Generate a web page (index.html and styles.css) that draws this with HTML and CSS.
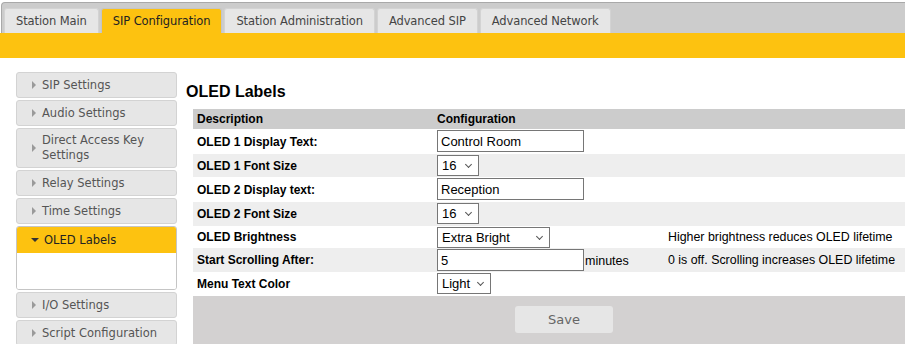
FILE: index.html
```html
<!DOCTYPE html>
<html>
<head>
<meta charset="utf-8">
<link rel="stylesheet" href="styles.css">
</head>
<body>
<div class="tabbar">
  <div class="tab">Station Main</div>
  <div class="tab active">SIP Configuration</div>
  <div class="tab">Station Administration</div>
  <div class="tab">Advanced SIP</div>
  <div class="tab">Advanced Network</div>
</div>
<div class="band"></div>
<div class="page">
  <nav class="side">
    <div class="item"><span class="tri"></span><span>SIP Settings</span></div>
    <div class="item"><span class="tri"></span><span>Audio Settings</span></div>
    <div class="item tall"><span class="tri"></span><span>Direct Access Key<br>Settings</span></div>
    <div class="item"><span class="tri"></span><span>Relay Settings</span></div>
    <div class="item"><span class="tri"></span><span>Time Settings</span></div>
    <div class="group">
      <div class="item open"><span class="tri down"></span><span>OLED Labels</span></div>
      <div class="groupbody"></div>
    </div>
    <div class="item"><span class="tri"></span><span>I/O Settings</span></div>
    <div class="item"><span class="tri"></span><span>Script Configuration</span></div>
  </nav>
  <main class="main">
    <h1 class="title">OLED Labels</h1>
    <div class="tbl">
      <div class="row head">
        <div class="c1">Description</div>
        <div class="c2">Configuration</div>
        <div class="c3"></div>
      </div>
      <div class="row h25">
        <div class="c1">OLED 1 Display Text:</div>
        <div class="c2"><input class="txt" value="Control Room"></div>
        <div class="c3"></div>
      </div>
      <div class="row alt h23">
        <div class="c1">OLED 1 Font Size</div>
        <div class="c2"><div class="sel w42">16<span class="chev"></span></div></div>
        <div class="c3"></div>
      </div>
      <div class="row h25">
        <div class="c1">OLED 2 Display text:</div>
        <div class="c2"><input class="txt" value="Reception"></div>
        <div class="c3"></div>
      </div>
      <div class="row alt">
        <div class="c1">OLED 2 Font Size</div>
        <div class="c2"><div class="sel w42">16<span class="chev"></span></div></div>
        <div class="c3"></div>
      </div>
      <div class="row h22">
        <div class="c1">OLED Brightness</div>
        <div class="c2"><div class="sel w113">Extra Bright<span class="chev"></span></div></div>
        <div class="c3">Higher brightness reduces OLED lifetime</div>
      </div>
      <div class="row alt">
        <div class="c1">Start Scrolling After:</div>
        <div class="c2"><input class="txt" value="5"><span class="unit">minutes</span></div>
        <div class="c3">0 is off. Scrolling increases OLED lifetime</div>
      </div>
      <div class="row">
        <div class="c1">Menu Text Color</div>
        <div class="c2"><div class="sel w54">Light<span class="chev"></span></div></div>
        <div class="c3"></div>
      </div>
      <div class="foot">
        <button class="save">Save</button>
      </div>
    </div>
  </main>
</div>
</body>
</html>
```
FILE: styles.css
```css
html, body { margin: 0; padding: 0; background: #fff; }
body { font-family: "Liberation Sans", Arial, sans-serif; color: #000; overflow: hidden; }

.tabbar {
  margin: 2px 0 0 1px;
  height: 31px;
  background: #cccccc;
  border-top: 1px solid #a9a9a9;
  border-left: 1px solid #a9a9a9;
  border-top-left-radius: 4px;
  box-sizing: border-box;
  display: flex;
  align-items: flex-end;
  padding-left: 2px;
  gap: 2px;
}
.tab {
  font-family: "DejaVu Sans", Verdana, sans-serif;
  font-size: 11.5px;
  letter-spacing: -0.1px;
  color: #444;
  background: #e6e6e6;
  border: 1px solid #d3d3d3;
  border-bottom: none;
  border-top-left-radius: 3px;
  border-top-right-radius: 3px;
  height: 25px;
  box-sizing: border-box;
  padding: 0 11px;
  display: flex;
  align-items: center;
}
.tab.active { background: #fdc210; border-color: #c5c5c5; color: #222; }
.band { height: 25px; background: #fdc210; }

.page { display: flex; align-items: flex-start; padding: 14px 0 0 16px; }
.side { width: 161px; display: flex; flex-direction: column; gap: 2px; flex: none; }
.item {
  font-family: "DejaVu Sans", Verdana, sans-serif;
  font-size: 11.5px;
  color: #555;
  background: #e6e6e6;
  border: 1px solid #d3d3d3;
  border-radius: 3px;
  min-height: 26px;
  box-sizing: border-box;
  display: flex;
  align-items: center;
  padding-left: 15px;
  line-height: 15px;
}
.item.tall { height: 40px; }
.tri {
  width: 0; height: 0;
  border-top: 4px solid transparent;
  border-bottom: 4px solid transparent;
  border-left: 4px solid #9a9a9a;
  margin-right: 6px;
  flex: none;
}
.tri.down {
  border-left: 4px solid transparent;
  border-right: 4px solid transparent;
  border-top: 4px solid #333;
  border-bottom: none;
  margin-left: -1px;
  margin-right: 5px;
}
.group { border: 1px solid #c5c5c5; border-radius: 3px; overflow: hidden; }
.group .item.open { background: #fdc210; border: none; border-radius: 0; color: #222; height: 26px; padding-left: 15px; }
.groupbody { height: 36px; background: #fff; }

.main { flex: 1; margin-left: 9px; }
.title { font-size: 16px; font-weight: bold; margin: 10px 0 8px 0; height: 19px; line-height: 19px; }
.tbl { margin-left: 7px; font-size: 12px; }
.row { display: flex; align-items: center; height: 24px; background: #fff; }
.row.alt { background: #eeeeee; }
.row.head { background: #cccccc; height: 20px; }
.row.h25 { height: 25px; }
.row.h23 { height: 23px; }
.row.h22 { height: 22px; }
.c1 { width: 244px; flex: none; padding-left: 4px; box-sizing: border-box; font-weight: bold; }
.c2 { width: 231px; flex: none; display: flex; align-items: flex-start; align-self: stretch; padding-top: 1px; box-sizing: border-box; }
.head .c2 { align-items: center; padding-top: 0; font-weight: bold; }
.c3 { flex: 1; font-size: 12.4px; white-space: nowrap; }

.txt {
  font-family: "Liberation Sans", Arial, sans-serif;
  font-size: 13px;
  width: 147px; height: 22px;
  box-sizing: border-box;
  border: 1px solid #767676;
  padding: 0 3px;
  margin: 0;
  background: #fff;
  color: #000;
}
.unit { font-size: 12.5px; margin-left: 1px; align-self: center; }
.sel {
  font-size: 13px;
  height: 21px;
  box-sizing: border-box;
  border: 1px solid #767676;
  display: flex;
  align-items: center;
  padding-left: 4px;
  position: relative;
  background: #fff;
}
.w42 { width: 42px; }
.w113 { width: 113px; }
.w54 { width: 54px; }
.chev {
  position: absolute;
  right: 7px; top: 6px;
  width: 4px; height: 4px;
  border-right: 1px solid #555;
  border-bottom: 1px solid #555;
  transform: rotate(45deg);
}
.foot { background: #d3d1d1; height: 60px; display: flex; padding-left: 322px; padding-top: 10px; box-sizing: border-box; }
.save {
  font-family: "DejaVu Sans", Verdana, sans-serif;
  font-size: 13px;
  color: #666;
  background: #e6e6e6;
  border: none;
  border-radius: 3px;
  width: 98px; height: 27px;
  margin: 0;
}
```
